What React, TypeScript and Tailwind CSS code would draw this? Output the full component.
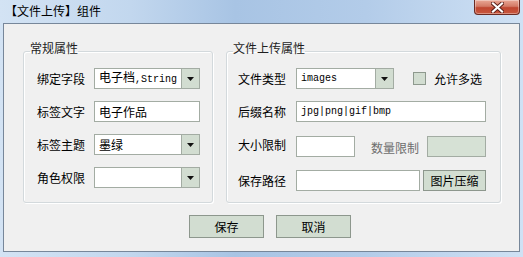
import type { ReactNode } from "react";

const cjk = "font-['Noto_Sans_CJK_SC',sans-serif]";
const mono = "font-['Liberation_Mono','Noto_Sans_CJK_SC',monospace]";

function Label({ children, muted = false }: { children: ReactNode; muted?: boolean }) {
  return (
    <span className={`text-[12px] leading-[21px] ${muted ? "text-[#6d6d6d]" : "text-black"}`}>
      {children}
    </span>
  );
}

function Box({ children, className = "" }: { children?: ReactNode; className?: string }) {
  return (
    <div
      className={`h-[21px] border border-[#a3aca3] bg-white flex items-center px-[4px] overflow-hidden ${className}`}
    >
      {children}
    </div>
  );
}

function Combo({ children, className = "" }: { children?: ReactNode; className?: string }) {
  return (
    <div className={`h-[21px] border border-[#a3aca3] bg-white flex ${className}`}>
      <div className="flex-1 flex items-center px-[4px] overflow-hidden">{children}</div>
      <div className="w-[18px] bg-[#d2ddd1] border-l border-[#a3aca3] flex items-center justify-center">
        <svg width="7" height="4" viewBox="0 0 7 4">
          <path d="M0 0h7L3.5 4z" fill="#111" />
        </svg>
      </div>
    </div>
  );
}

function Lat({ children }: { children: ReactNode }) {
  return <span className={`${mono} text-[10px] leading-[12px]`}>{children}</span>;
}

function Group({ title, className = "", children }: { title: string; className?: string; children: ReactNode }) {
  return (
    <fieldset
      className={`border border-[#d3d9dc] rounded-[3px] shadow-[inset_1px_1px_0_#fff,1px_1px_0_#fff] ${className}`}
    >
      <legend className="ml-[6px] text-[12px] leading-[12px] pb-[6px] text-[#1e1e1e]">{title}</legend>
      {children}
    </fieldset>
  );
}

export default function App() {
  return (
    <div
      className={`${cjk} w-[523px] h-[257px] flex flex-col bg-[linear-gradient(90deg,#d3e3f4_0%,#c2d7ee_25%,#a8c4e4_45%,#b3cce9_70%,#cfe1f4_100%)] overflow-hidden`}
    >
      {/* title bar */}
      <div className="h-[23px] flex items-start justify-between">
        <span className="pl-[5px] pt-[4px] text-[12px] leading-[13px] text-black">【文件上传】组件</span>
        <div className="mr-[3px] w-[46px] h-[15px] rounded-b-[4px] border border-t-0 border-[#6a2a22] bg-[linear-gradient(180deg,#e9a896_0%,#d37a66_45%,#bf4630_55%,#c9573e_100%)] flex items-center justify-center shadow-[inset_0_0_0_1px_rgba(255,255,255,0.35)]">
          <svg width="13" height="11" viewBox="0 0 13 11">
            <path d="M2 1.5l9 8M11 1.5l-9 8" stroke="#5a1f18" strokeWidth="4" strokeLinecap="square" />
            <path d="M2 1.5l9 8M11 1.5l-9 8" stroke="#fff" strokeWidth="2.2" strokeLinecap="square" />
          </svg>
        </div>
      </div>

      {/* client area */}
      <div className="mx-[3px] h-[229px] border border-[#77879a] bg-[#f0f0f0] pt-[18px] flex flex-col">
        <div className="flex pl-[19px] gap-[13px]">
          <Group title="常规属性" className="w-[190px] h-[161px]">
            <div className="grid grid-cols-[57px_1fr] gap-y-[12px] pt-[8px] pl-[13px] pr-[12px]">
              <Label>绑定字段</Label>
              <Combo>
                <span className="text-[12px] leading-[12px] whitespace-nowrap">
                  电子档<Lat>,String</Lat>
                </span>
              </Combo>
              <Label>标签文字</Label>
              <Box>
                <span className="text-[12px] leading-[12px]">电子作品</span>
              </Box>
              <Label>标签主题</Label>
              <Combo>
                <span className="text-[12px] leading-[12px]">墨绿</span>
              </Combo>
              <Label>角色权限</Label>
              <Combo />
            </div>
          </Group>

          <Group title="文件上传属性" className="w-[275px] h-[161px]">
            <div className="grid grid-cols-[58px_1fr] gap-y-[12px] pt-[8px] pl-[11px] pr-[14px]">
              <Label>文件类型</Label>
              <div className="flex items-center">
                <Combo className="w-[98px]">
                  <Lat>images</Lat>
                </Combo>
                <div className="ml-[19px] w-[13px] h-[13px] border border-[#8e998e] bg-[#d2ddd1]" />
                <span className="ml-[8px] text-[12px] leading-[21px]">允许多选</span>
              </div>
              <Label>后缀名称</Label>
              <Box>
                <Lat>jpg|png|gif|bmp</Lat>
              </Box>
              <Label>大小限制</Label>
              <div className="flex items-center">
                <Box className="w-[59px]" />
                <span className="ml-[16px] w-[56px]">
                  <Label muted>数量限制</Label>
                </span>
                <div className="h-[21px] flex-1 border border-[#a3aca3] bg-[#d6e1d5]" />
              </div>
              <Label>保存路径</Label>
              <div className="flex items-center gap-[3px]">
                <Box className="w-[124px]" />
                <button className="flex-1 h-[21px] border border-[#8d978d] bg-[#d2ddd1] text-[12px] leading-[12px] text-black">
                  图片压缩
                </button>
              </div>
            </div>
          </Group>
        </div>

        <div className="flex pl-[185px] gap-[12px] mt-[12px]">
          <button className="w-[75px] h-[23px] border border-[#8d978d] bg-[#d2ddd1] text-[12px] leading-[12px] text-black">
            保存
          </button>
          <button className="w-[75px] h-[23px] border border-[#8d978d] bg-[#d2ddd1] text-[12px] leading-[12px] text-black">
            取消
          </button>
        </div>
      </div>
    </div>
  );
}
